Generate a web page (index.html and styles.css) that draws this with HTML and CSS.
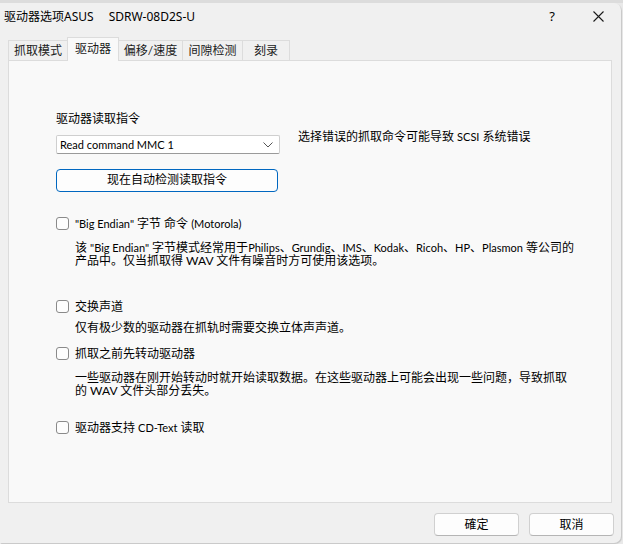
FILE: index.html
```html
<!DOCTYPE html>
<html lang="zh-CN">
<head>
<meta charset="utf-8">
<title>驱动器选项</title>
<link rel="stylesheet" href="styles.css">
</head>
<body>
<div class="bgstrip"></div>
<div class="dialog">
  <div class="titlebar">
    <span class="title">驱动器选项ASUS</span>
    <span class="title model">SDRW-08D2S-U</span>
    <span class="spacer"></span>
    <span class="help">?</span>
    <span class="close">
      <svg width="11" height="11" viewBox="0 0 11 11"><path d="M0.5 0.5 L10.5 10.5 M10.5 0.5 L0.5 10.5" stroke="#1a1a1a" stroke-width="1.1" fill="none"/></svg>
    </span>
  </div>
  <div class="tabs">
    <div class="tab t1">抓取模式</div>
    <div class="tab t2 active">驱动器</div>
    <div class="tab t3">偏移/速度</div>
    <div class="tab t4">间隙检测</div>
    <div class="tab t5">刻录</div>
  </div>
  <div class="panel">
    <div class="label">驱动器读取指令</div>
    <div class="selrow">
      <div class="select">
        <span class="lat">Read command MMC 1</span>
        <svg width="10" height="6" viewBox="0 0 10 6"><path d="M0.5 0.5 L5 5 L9.5 0.5" stroke="#555" stroke-width="1" fill="none"/></svg>
      </div>
      <div class="hint">选择错误的抓取命令可能导致 <span class="lat">SCSI</span> 系统错误</div>
    </div>
    <div class="btn detect">现在自动检测读取指令</div>

    <div class="check c1"><span class="box"></span><span><span class="lat">"Big Endian"</span> 字节 命令 <span class="lat">(Motorola)</span></span></div>
    <div class="desc d1">
      <div class="line">该 <span class="lat">"Big Endian"</span> 字节模式经常用于<span class="lat">Philips</span>、<span class="lat">Grundig</span>、<span class="lat">IMS</span>、<span class="lat">Kodak</span>、<span class="lat">Ricoh</span>、<span class="lat">HP</span>、<span class="lat">Plasmon</span> 等公司的</div>
      <div class="line">产品中。仅当抓取得 WAV 文件有噪音时方可使用该选项。</div>
    </div>

    <div class="check c2"><span class="box"></span><span>交换声道</span></div>
    <div class="desc d2">
      <div class="line">仅有极少数的驱动器在抓轨时需要交换立体声声道。</div>
    </div>

    <div class="check c3"><span class="box"></span><span>抓取之前先转动驱动器</span></div>
    <div class="desc d3">
      <div class="line">一些驱动器在刚开始转动时就开始读取数据。在这些驱动器上可能会出现一些问题，导致抓取</div>
      <div class="line">的 WAV 文件头部分丢失。</div>
    </div>

    <div class="check c4"><span class="box"></span><span>驱动器支持 <span class="lat">CD-Text</span> 读取</span></div>
  </div>
  <div class="footer">
    <div class="btn foot">確定</div>
    <div class="btn foot">取消</div>
  </div>
</div>
</body>
</html>
```
FILE: styles.css
```css
html, body {
  margin: 0;
  padding: 0;
  width: 623px;
  height: 544px;
  overflow: hidden;
  background: #e9e9e9;
}
body {
  font-family: Lato, "Noto Sans CJK SC", sans-serif;
  font-size: 12px;
  color: #000;
}
.lat {
  font-size: 11px;
}
.bgstrip {
  height: 3px;
  background: #dcdcdc;
}
.dialog {
  width: 621px;
  height: 540px;
  background: #f0f0f0;
  border-radius: 0 7px 7px 0;
  box-shadow: 1px 1px 1px rgba(0,0,0,0.15);
}
.titlebar {
  height: 27px;
  display: flex;
  align-items: center;
  padding-left: 4px;
  line-height: 15px;
  font-family: "Noto Sans", "Noto Sans CJK SC", sans-serif;
}
.title.model {
  margin-left: 15px;
}
.spacer { flex: 1; }
.help {
  font-size: 13px;
  margin-right: 38px;
}
.close {
  display: flex;
  margin-right: 17px;
}
.tabs {
  display: flex;
  align-items: flex-end;
  height: 30px;
  padding-left: 8px;
}
.tab {
  height: 19px;
  line-height: 19px;
  text-align: center;
  border: 1px solid #dcdcdc;
  border-bottom: none;
  margin-left: -1px;
  background: #f0f0f0;
  color: #1a1a1a;
}
.tab.t1 { width: 58px; margin-left: 0; }
.tab.t2 { width: 50px; }
.tab.t3 { width: 63px; }
.tab.t4 { width: 59px; }
.tab.t5 { width: 46px; }
.tab.active {
  height: 23px;
  line-height: 21px;
  background: #f9f9f9;
  position: relative;
  z-index: 1;
  margin-bottom: -1px;
}
.panel {
  margin-left: 8px;
  width: 602px;
  height: 441px;
  background: #f9f9f9;
  border: 1px solid #dcdcdc;
}
.panel > * { margin-left: 47px; }
.label {
  margin-top: 50px;
  line-height: 15px;
}
.selrow {
  display: flex;
  align-items: flex-start;
  margin-top: 9px;
}
.select {
  height: 17px;
  width: 213px;
  border: 1px solid #cfcfcf;
  border-bottom-color: #9a9a9a;
  border-radius: 2px;
  background: #fff;
  display: flex;
  align-items: center;
  justify-content: space-between;
  padding: 0 6px 0 3px;
  line-height: 17px;
}
.hint {
  margin-left: 18px;
  margin-top: -6px;
  line-height: 15px;
}
.btn {
  background: #fdfdfd;
  border: 1px solid #d0d0d0;
  border-bottom-color: #b5b5b5;
  border-radius: 4px;
  text-align: center;
  box-sizing: border-box;
}
.btn.detect {
  width: 222px;
  height: 23px;
  line-height: 19px;
  margin-top: 15px;
  border: 1.5px solid #0067c0;
}
.check {
  display: flex;
  align-items: center;
  height: 15px;
  line-height: 15px;
}
.box {
  width: 11px;
  height: 11px;
  border: 1px solid #8a8a8a;
  border-radius: 3px;
  background: #fdfdfd;
  margin-right: 6px;
  flex: none;
}
.c1 { margin-top: 24px; }
.c2 { margin-top: 32px; }
.c3 { margin-top: 12px; }
.c4 { margin-top: 23px; }
.desc {
  margin-left: 66px !important;
  white-space: nowrap;
}
.desc .line {
  height: 13px;
  line-height: 13px;
}
.d1 { margin-top: 10px; }
.d2 { margin-top: 7px; }
.d3 { margin-top: 10px; }
.footer {
  display: flex;
  justify-content: flex-end;
  gap: 10px;
  margin-top: 10px;
  padding-right: 7px;
}
.btn.foot {
  width: 85px;
  height: 23px;
  line-height: 21px;
}
```
